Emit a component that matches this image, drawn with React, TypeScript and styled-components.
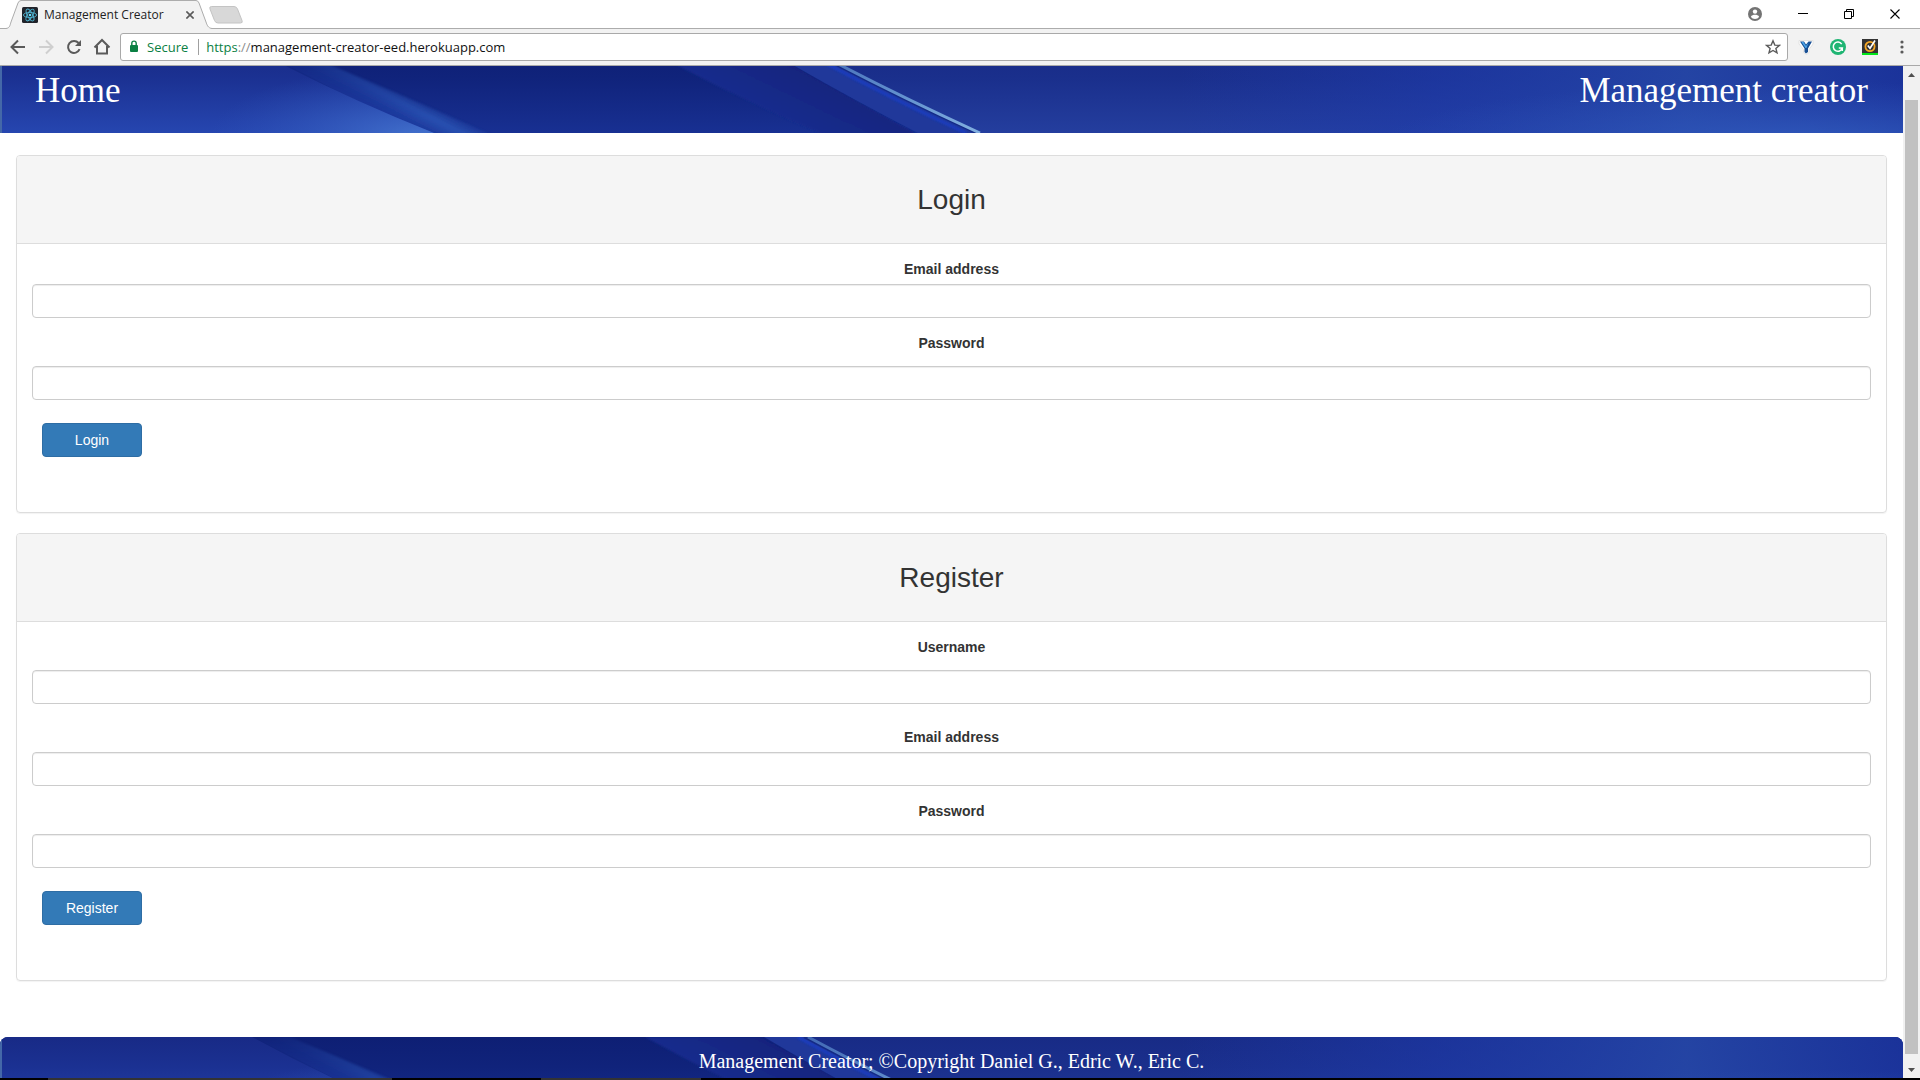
import React, { useId } from "react";
import styled, { createGlobalStyle } from "styled-components";

const GlobalStyle = createGlobalStyle`
  *, *::before, *::after { box-sizing: border-box; }
  html, body { margin: 0; padding: 0; background: #fff; }
  button, input { font: inherit; margin: 0; }
`;

const uiFont = `"Open Sans", "Noto Sans", sans-serif`;
const bodyFont = `"Liberation Sans", Arial, Helvetica, sans-serif`;
const serifFont = `"Liberation Serif", "Times New Roman", serif`;

/* ---------- browser window ---------- */

const Window = styled.div`
  display: flex;
  flex-direction: column;
  height: 100vh;
  overflow: hidden;
  font-family: ${uiFont};
`;

const TabStrip = styled.header`
  display: flex;
  align-items: stretch;
  flex: none;
  height: 29px;
  padding: 0 2px 0 6px;
  border-bottom: 1px solid #acacac;
`;

const Tab = styled.div`
  display: grid;
  width: 206px;
  height: 29px;
  & > * { grid-area: 1 / 1; }
`;

const TabShape = styled.svg`
  width: 206px;
  height: 29px;
`;

const TabContent = styled.div`
  display: flex;
  align-items: center;
  gap: 6px;
  padding: 0 18px 0 16px;
  z-index: 1;
`;

const TabTitle = styled.span`
  flex: 1;
  font-size: 12px;
  line-height: 16px;
  color: #222;
  white-space: nowrap;
`;

const IconButton = styled.button<{ $width?: number }>`
  display: flex;
  align-items: center;
  justify-content: center;
  flex: none;
  width: ${(p) => p.$width ?? 28}px;
  height: 27px;
  padding: 0;
  border: 0;
  background: none;
  color: #5a5a5a;
`;

const NewTab = styled.button`
  display: flex;
  align-items: center;
  width: 36px;
  padding: 2px 0 0;
  margin-left: -4px;
  border: 0;
  background: none;
`;

const WindowControls = styled.div`
  display: flex;
  margin-left: auto;
`;

const Toolbar = styled.div`
  display: flex;
  align-items: center;
  flex: none;
  height: 37px;
  padding: 0 2px 1px 4px;
  background: #f2f2f2;
  border-bottom: 1px solid #a9a9a9;
`;

const Omnibox = styled.div`
  display: flex;
  align-items: center;
  flex: 1;
  height: 28px;
  margin: 0 2px 0 4px;
  padding: 0 0 0 8px;
  border: 1px solid #a9a9a9;
  border-radius: 3px;
  background: #fff;
  font-size: 13px;
  line-height: 18px;
`;

const Secure = styled.span`
  margin-left: 8px;
  padding-right: 10px;
  border-right: 1px solid #a0a0a0;
  line-height: 16px;
  color: #0b8043;
`;

const Scheme = styled.span`
  margin-left: 7px;
  color: #0b8043;
`;

const Slashes = styled.span`
  color: #8c8c8c;
`;

const Address = styled.input`
  flex: 1;
  min-width: 0;
  padding: 0;
  border: 0;
  outline: 0;
  background: none;
  color: #111;
`;

const Viewport = styled.div`
  display: flex;
  flex: 1;
  min-height: 0;
`;

const TaskbarEdge = styled.div`
  flex: none;
  height: 2px;
  background: linear-gradient(
    90deg,
    #000 48px, #333 48px, #333 392px, #000 392px,
    #000 541px, #333 541px, #333 701px, #000 701px
  );
`;

const Scrollbar = styled.div`
  display: flex;
  flex-direction: column;
  flex: none;
  width: 17px;
  background: #f1f1f1;
`;

const ScrollArrow = styled.button`
  display: flex;
  align-items: center;
  justify-content: center;
  height: 17px;
  padding: 0;
  border: 0;
  background: none;
`;

const ScrollTrack = styled.div`
  display: flex;
  flex: 1;
  padding: 17px 2px 7px;
`;

const ScrollThumb = styled.div`
  flex: 1;
  background: #c1c1c1;
`;

/* ---------- page ---------- */

const Page = styled.div`
  display: flex;
  flex-direction: column;
  flex: 1;
  min-width: 0;
  overflow: hidden;
  background: #fff;
  color: #333;
  font-family: ${bodyFont};
  font-size: 14px;
  line-height: 20px;
`;

const Layered = styled.div`
  display: grid;
  overflow: hidden;
  color: #fff;
  font-family: ${serifFont};
  & > * { grid-area: 1 / 1; min-width: 0; }
`;

const BannerBox = styled(Layered)`
  flex: none;
  height: 67px;
`;

const FooterBox = styled(Layered)`
  flex: 1;
  border-radius: 8px 8px 0 0;
`;

const Artwork = styled.svg`
  width: 100%;
  height: 100%;
`;

const Nav = styled.nav`
  display: flex;
  justify-content: space-between;
  align-items: flex-start;
  z-index: 1;
  padding: 5px 35px 0;
  font-size: 35px;
  line-height: 40px;
`;

const NavLink = styled.a`
  color: #fff;
  text-decoration: none;
`;

const Copyright = styled.p`
  z-index: 1;
  margin: 0;
  padding-top: 12px;
  text-align: center;
  font-size: 20px;
  line-height: 24px;
`;

const Main = styled.main`
  display: flex;
  flex-direction: column;
  flex: none;
  gap: 20px;
  padding: 22px 16px 56px;
`;

const Panel = styled.section`
  border: 1px solid #ddd;
  border-radius: 4px;
  box-shadow: 0 1px 1px rgba(0, 0, 0, 0.05);
`;

const PanelHeading = styled.div`
  padding: 28px 15px;
  border-bottom: 1px solid #ddd;
  border-radius: 3px 3px 0 0;
  background: #f5f5f5;
`;

const PanelTitle = styled.h2`
  margin: 0;
  text-align: center;
  font-size: 28px;
  font-weight: 400;
  line-height: 31px;
`;

const Form = styled.form`
  display: flex;
  flex-direction: column;
  align-items: stretch;
  gap: 15px;
  padding: 15px 15px 55px;
`;

const Field = styled.div<{ $roomy?: boolean }>`
  display: flex;
  flex-direction: column;
  gap: ${(p) => (p.$roomy ? 13 : 5)}px;
  padding-bottom: ${(p) => (p.$roomy ? 8 : 0)}px;
`;

const Label = styled.label`
  text-align: center;
  font-weight: 700;
`;

const TextBox = styled.input`
  height: 34px;
  padding: 6px 12px;
  border: 1px solid #ccc;
  border-radius: 4px;
  background: #fff;
  color: #555;
  box-shadow: inset 0 1px 1px rgba(0, 0, 0, 0.075);
`;

const Submit = styled.button`
  align-self: flex-start;
  width: 100px;
  height: 34px;
  margin-left: 10px;
  padding: 6px 12px;
  border: 1px solid #2e6da4;
  border-radius: 4px;
  background: #337ab7;
  color: #fff;
`;

type FieldSpec = { label: string; type: string; roomy?: boolean };

function FormPanel({ title, fields }: { title: string; fields: FieldSpec[] }) {
  const id = useId();
  return (
    <Panel>
      <PanelHeading>
        <PanelTitle>{title}</PanelTitle>
      </PanelHeading>
      <Form onSubmit={(e) => e.preventDefault()}>
        {fields.map((f) => (
          <Field key={f.label} $roomy={f.roomy}>
            <Label htmlFor={id + f.label}>{f.label}</Label>
            <TextBox id={id + f.label} type={f.type} />
          </Field>
        ))}
        <Submit type="submit">{title}</Submit>
      </Form>
    </Panel>
  );
}

/* Blue swoosh artwork; top and height choose which slice of it shows. */
function Swoosh({ top, height }: { top: number; height: number }) {
  const id = useId().replace(/[^a-zA-Z0-9]/g, "");
  const u = (n: string) => `url(#${id}${n})`;
  return (
    <Artwork viewBox={`0 ${top} 1903 ${height}`} preserveAspectRatio="none" aria-hidden="true">
      <defs>
        <linearGradient id={id + "base"} gradientUnits="userSpaceOnUse" x1="0" y1="0" x2="0" y2="85">
          <stop offset="0" stopColor="#0e1f74" />
          <stop offset="0.35" stopColor="#10237b" />
          <stop offset="1" stopColor="#183092" />
        </linearGradient>
        <linearGradient id={id + "left"} gradientUnits="userSpaceOnUse" x1="0" y1="0" x2="0" y2="85">
          <stop offset="0" stopColor="#182a86" />
          <stop offset="0.35" stopColor="#1b3192" />
          <stop offset="1" stopColor="#2646b0" />
        </linearGradient>
        <radialGradient id={id + "glow"} gradientUnits="userSpaceOnUse" cx="0" cy="0" r="1" gradientTransform="translate(420 88) scale(210 70)">
          <stop offset="0" stopColor="#4270cc" />
          <stop offset="1" stopColor="#2f55bb" stopOpacity="0" />
        </radialGradient>
        <linearGradient id={id + "sheen"} gradientUnits="userSpaceOnUse" x1="350" y1="60" x2="370" y2="21">
          <stop offset="0" stopColor="#1c3699" />
          <stop offset="0.35" stopColor="#1d3a9e" />
          <stop offset="0.65" stopColor="#2850b0" />
          <stop offset="1" stopColor="#2850b0" stopOpacity="0" />
        </linearGradient>
        <linearGradient id={id + "fade"} gradientUnits="userSpaceOnUse" x1="0" y1="0" x2="0" y2="70">
          <stop offset="0" stopColor="#fff" stopOpacity="0.15" />
          <stop offset="1" stopColor="#fff" />
        </linearGradient>
        <mask id={id + "m"} maskUnits="userSpaceOnUse" x="0" y="0" width="1903" height="85">
          <rect width="1903" height="85" fill={u("fade")} />
        </mask>
        <linearGradient id={id + "band"} gradientUnits="userSpaceOnUse" x1="735" y1="58" x2="765" y2="-4">
          <stop offset="0" stopColor="#182e90" />
          <stop offset="1" stopColor="#11237c" />
        </linearGradient>
        <linearGradient id={id + "right"} gradientUnits="userSpaceOnUse" x1="0" y1="0" x2="0" y2="85">
          <stop offset="0" stopColor="#182b86" />
          <stop offset="0.35" stopColor="#1a2f8c" />
          <stop offset="1" stopColor="#243e9e" />
        </linearGradient>
        <linearGradient id={id + "bright"} x1="0" y1="0" x2="1" y2="0">
          <stop offset="0" stopColor="#1f3cae" stopOpacity="0" />
          <stop offset="0.35" stopColor="#1f3cae" stopOpacity="0.5" />
          <stop offset="0.7" stopColor="#2648a8" stopOpacity="0.85" />
          <stop offset="1" stopColor="#1b349e" stopOpacity="0.8" />
        </linearGradient>
        <radialGradient id={id + "low"} gradientUnits="userSpaceOnUse" cx="0" cy="0" r="1" gradientTransform="translate(1800 95) scale(420 62)">
          <stop offset="0" stopColor="#3059bc" />
          <stop offset="1" stopColor="#2a4eb4" stopOpacity="0" />
        </radialGradient>
        <linearGradient id={id + "streak"} gradientUnits="userSpaceOnUse" x1="0" y1="0" x2="0" y2="85">
          <stop offset="0" stopColor="#4168b4" />
          <stop offset="0.6" stopColor="#6594d0" />
          <stop offset="1" stopColor="#82b0e0" />
        </linearGradient>
        <filter id={id + "soft"} x="-5%" y="-20%" width="110%" height="140%">
          <feGaussianBlur stdDeviation="1" />
        </filter>
      </defs>
      <rect width="1903" height="85" fill={u("base")} />
      <g mask={u("m")}>
        <path d="M250 0 H290 Q382 38 488 85 L510 95 H430 Q342 45 250 0Z" fill={u("sheen")} filter={u("soft")} />
      </g>
      <path d="M0 0 H252 Q336 46 434 85 H0Z" fill={u("left")} />
      <path d="M0 0 H252 Q336 46 434 85 H0Z" fill={u("glow")} />
      <path d="M645 0 H764 Q834 42 915 85 V95 H840 L820 85 Q728 46 645 0Z" fill={u("band")} filter={u("soft")} />
      <path d="M764 0 H808 Q886 42 980 85 H918 Q838 44 764 0Z" fill="#20389a" />
      <path d="M808 0 H1903 V85 H980 Q886 42 808 0Z" fill={u("right")} />
      <rect x="1180" width="723" height="85" fill={u("bright")} />
      <path d="M808 0 H1903 V85 H980 Q886 42 808 0Z" fill={u("low")} />
      <path d="M798 0 Q874 42 966 85" fill="none" stroke="#1a3cc0" strokeWidth="3" filter={u("soft")} />
      <path d="M804 0 Q884 43 976 85" fill="none" stroke="#142a86" strokeWidth="2" />
      <path d="M808 0 Q886 42 980 85" fill="none" stroke={u("streak")} strokeWidth="3" />
      <rect width="2" height="85" fill="#4468a8" />
    </Artwork>
  );
}

/* ---------- icons ---------- */

const ReactFavicon = () => (
  <svg width="16" height="16" viewBox="0 0 16 16" aria-hidden="true">
    <rect width="16" height="16" rx="1.5" fill="#20232a" />
    <g fill="none" stroke="#4fb3d0" strokeWidth="0.9">
      <ellipse cx="8" cy="8" rx="6.6" ry="2.6" />
      <ellipse cx="8" cy="8" rx="6.6" ry="2.6" transform="rotate(60 8 8)" />
      <ellipse cx="8" cy="8" rx="6.6" ry="2.6" transform="rotate(120 8 8)" />
    </g>
    <circle cx="8" cy="8" r="1.3" fill="#61dafb" />
  </svg>
);

const Arrow = ({ flip }: { flip?: boolean }) => (
  <svg width="16" height="16" viewBox="0 0 16 16" fill="none" stroke={flip ? "#cfcfcf" : "#5a5a5a"} strokeWidth="2" aria-hidden="true">
    <path d={flip ? "M1 8H14M8 1.5L14.5 8L8 14.5" : "M15 8H2M8 1.5L1.5 8L8 14.5"} />
  </svg>
);

const Reload = () => (
  <svg width="16" height="16" viewBox="0 0 16 16" aria-hidden="true">
    <path d="M13.6 10.2A6 6 0 1 1 12.6 4" fill="none" stroke="#5a5a5a" strokeWidth="2" />
    <path d="M15 1V7H9Z" fill="#5a5a5a" />
  </svg>
);

const HomeIcon = () => (
  <svg width="18" height="18" viewBox="0 0 18 18" fill="none" stroke="#5a5a5a" strokeWidth="2" aria-hidden="true">
    <path d="M1.5 9.5L9 2L16.5 9.5M4 8V15.5H14V8" />
  </svg>
);

const Lock = () => (
  <svg width="10" height="13" viewBox="0 0 10 13" aria-hidden="true">
    <rect x="1" y="5" width="8" height="7" rx="1" fill="#0b8043" />
    <path d="M2.8 5.5V3.3A2.2 2.2 0 0 1 7.2 3.3V5.5" fill="none" stroke="#0b8043" strokeWidth="1.4" />
  </svg>
);

const Star = () => (
  <svg width="16" height="16" viewBox="0 0 16 16" fill="none" stroke="#5a5a5a" strokeWidth="1.4" aria-hidden="true">
    <path d="M8 1.8L9.8 6.1L14.4 6.4L10.9 9.4L12 13.9L8 11.5L4 13.9L5.1 9.4L1.6 6.4L6.2 6.1Z" />
  </svg>
);

const VueExtension = () => (
  <svg width="16" height="16" viewBox="0 0 16 16" aria-hidden="true">
    <path d="M1 1.500H15V5L11 10.500V13.500L8.500 15.500L5.500 13.500V10.500L1 5Z" fill="#fff" stroke="#ddd" strokeWidth="0.8" />
    <path d="M2 2.500H6L8 5.500L10.500 2.500H14L10 9.500V13L8 14.500L6.500 13V9.500Z" fill="#174f94" />
    <path d="M3.500 3H5.500L8 7L10.500 3.500L8.500 9H7.500Z" fill="#4aa3e8" />
  </svg>
);

const GrammarExtension = () => (
  <svg width="16" height="16" viewBox="0 0 16 16" aria-hidden="true">
    <circle cx="8" cy="8" r="8" fill="#1fb573" />
    <path d="M11.7 5.1A4.6 4.6 0 1 0 12.3 9H8.8M12.3 8.6V12" fill="none" stroke="#fff" strokeWidth="1.5" />
  </svg>
);

const SafeExtension = () => (
  <svg width="16" height="16" viewBox="0 0 16 16" aria-hidden="true">
    <rect width="16" height="14" fill="#333" />
    <rect y="14" width="16" height="2" fill="#00e51a" />
    <circle cx="8" cy="7.5" r="4.6" fill="none" stroke="#f5a623" strokeWidth="1.8" />
    <path d="M5.8 6.5L8 9.3L13 1.5" fill="none" stroke="#fff" strokeWidth="1.6" />
  </svg>
);

const Dots = () => (
  <svg width="4" height="14" viewBox="0 0 4 14" fill="#5a5a5a" aria-hidden="true">
    <circle cx="2" cy="2" r="1.6" />
    <circle cx="2" cy="7" r="1.6" />
    <circle cx="2" cy="12" r="1.6" />
  </svg>
);

const Person = () => (
  <svg width="14" height="14" viewBox="0 0 14 14" aria-hidden="true">
    <circle cx="7" cy="7" r="7" fill="#737373" />
    <circle cx="7" cy="4.6" r="2.2" fill="#fff" />
    <path d="M2.9 9.8C3.4 8.2 5.4 7.8 7 7.8S10.6 8.2 11.1 9.8C10.2 11.2 8.7 12 7 12S3.8 11.2 2.9 9.8Z" fill="#fff" />
  </svg>
);

const Minimize = () => (
  <svg width="10" height="10" viewBox="0 0 10 10" aria-hidden="true">
    <path d="M0 4.5H10" stroke="#000" />
  </svg>
);

const Restore = () => (
  <svg width="10" height="10" viewBox="0 0 10 10" fill="none" stroke="#000" aria-hidden="true">
    <path d="M0.5 2.5H7.5V9.5H0.5ZM2.5 2.5V0.5H9.5V7.5H7.5" />
  </svg>
);

const Cross = ({ size, color, weight }: { size: number; color: string; weight: number }) => (
  <svg width={size} height={size} viewBox="0 0 10 10" aria-hidden="true">
    <path d="M0.5 0.5L9.5 9.5M9.5 0.5L0.5 9.5" stroke={color} strokeWidth={weight} />
  </svg>
);

const TabClose = styled.button`
  display: flex;
  padding: 0;
  border: 0;
  background: none;
`;

const Triangle = ({ down }: { down?: boolean }) => (
  <svg width="7" height="4" viewBox="0 0 7 4" fill="#505050" aria-hidden="true">
    <path d={down ? "M0 0H7L3.5 4Z" : "M0 4H7L3.5 0Z"} />
  </svg>
);

export default function App() {
  return (
    <Window>
      <GlobalStyle />
      <TabStrip>
        <Tab>
          <TabShape viewBox="0 0 206 29" aria-hidden="true">
            <path d="M0 29V28.5C4 28 4 25 5 22L12 3Q13 0.5 15 0.5H190Q192 0.5 193 3L200 22C201 25 202 28 206 28.5V29Z" fill="#f2f2f2" />
            <path d="M0 28.5C4 28 4 25 5 22L12 3Q13 0.5 15 0.5H190Q192 0.5 193 3L200 22C201 25 202 28 206 28.5" fill="none" stroke="#acacac" />
          </TabShape>
          <TabContent>
            <ReactFavicon />
            <TabTitle>Management Creator</TabTitle>
            <TabClose aria-label="Close tab">
              <Cross size={8} color="#5a5a5a" weight={2} />
            </TabClose>
          </TabContent>
        </Tab>
        <NewTab aria-label="New tab">
          <svg width="36" height="18" viewBox="0 0 36 18" aria-hidden="true">
            <path d="M3.5 0.5H26Q28.5 0.5 29.5 3L34 14.5Q35 17 32.5 17H10Q7.500 17 6.500 14.500L2 3Q1 0.500 3.500 0.500Z" fill="#d8d8d8" stroke="#c4c4c4" />
          </svg>
        </NewTab>
        <WindowControls>
          <IconButton $width={50} aria-label="Profile"><Person /></IconButton>
          <IconButton $width={46} aria-label="Minimize"><Minimize /></IconButton>
          <IconButton $width={46} aria-label="Restore"><Restore /></IconButton>
          <IconButton $width={46} aria-label="Close"><Cross size={10} color="#000" weight={1.1} /></IconButton>
        </WindowControls>
      </TabStrip>
      <Toolbar>
        <IconButton aria-label="Back"><Arrow /></IconButton>
        <IconButton aria-label="Forward"><Arrow flip /></IconButton>
        <IconButton aria-label="Reload"><Reload /></IconButton>
        <IconButton aria-label="Home page"><HomeIcon /></IconButton>
        <Omnibox>
          <Lock />
          <Secure>Secure</Secure>
          <Scheme>https</Scheme>
          <Slashes>://</Slashes>
          <Address aria-label="Address" defaultValue="management-creator-eed.herokuapp.com" />
          <IconButton aria-label="Bookmark"><Star /></IconButton>
        </Omnibox>
        <IconButton $width={32} aria-label="Extension"><VueExtension /></IconButton>
        <IconButton $width={32} aria-label="Grammar"><GrammarExtension /></IconButton>
        <IconButton $width={32} aria-label="Safe browsing"><SafeExtension /></IconButton>
        <IconButton $width={32} aria-label="Menu"><Dots /></IconButton>
      </Toolbar>
      <Viewport>
        <Page>
          <BannerBox as="header">
            <Swoosh top={18} height={67} />
            <Nav>
              <NavLink href="#">Home</NavLink>
              <NavLink href="#">Management creator</NavLink>
            </Nav>
          </BannerBox>
          <Main>
            <FormPanel
              title="Login"
              fields={[
                { label: "Email address", type: "email" },
                { label: "Password", type: "password", roomy: true },
              ]}
            />
            <FormPanel
              title="Register"
              fields={[
                { label: "Username", type: "text", roomy: true },
                { label: "Email address", type: "email" },
                { label: "Password", type: "password", roomy: true },
              ]}
            />
          </Main>
          <FooterBox as="footer">
            <Swoosh top={0} height={41} />
            <Copyright>Management Creator; ©Copyright Daniel G., Edric W., Eric C.</Copyright>
          </FooterBox>
        </Page>
        <Scrollbar>
          <ScrollArrow aria-label="Scroll up"><Triangle /></ScrollArrow>
          <ScrollTrack><ScrollThumb /></ScrollTrack>
          <ScrollArrow aria-label="Scroll down"><Triangle down /></ScrollArrow>
        </Scrollbar>
      </Viewport>
      <TaskbarEdge />
    </Window>
  );
}
